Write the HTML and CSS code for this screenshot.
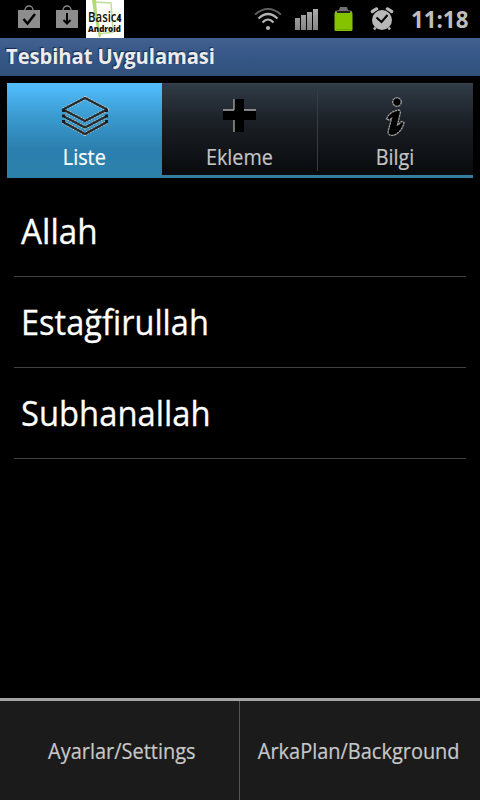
FILE: index.html
```html
<!DOCTYPE html>
<html lang="tr">
<head>
<meta charset="utf-8">
<title>Tesbihat Uygulamasi</title>
<link rel="stylesheet" href="styles.css">
</head>
<body>
<div class="screen">
  <header class="status">
    <svg class="bag" width="22" height="24" viewBox="0 0 22 24"><path d="M7 6V5a4 4 0 0 1 8 0v1" fill="none" stroke="#888" stroke-width="1.3"/><path d="M0 5h22v18H0z" fill="#8d8d8d"/><path d="M5.500 14l4 4.500 7.500-9.500" fill="none" stroke="#000" stroke-width="2.500"/></svg>
    <svg class="bag" width="22" height="24" viewBox="0 0 22 24"><path d="M7 6V5a4 4 0 0 1 8 0v1" fill="none" stroke="#888" stroke-width="1.3"/><path d="M0 5h22v18H0z" fill="#8d8d8d"/><path d="M11 8v10M7.500 15l3.500 3.500 3.500-3.500" fill="none" stroke="#000" stroke-width="2"/></svg>
    <div class="basic">
      <svg class="basic-art" width="38" height="38" viewBox="0 0 38 38"><path d="M8 2l17 1 2 29-14 2" fill="#fff" stroke="#c0de94" stroke-width="1.500"/><path d="M6 0h4l1 12 4 24-2 2L8 14z" fill="#b4da74"/></svg>
      <span class="basic-top">Basic<small>4</small></span>
      <span class="basic-bottom">Android</span>
    </div>
    <svg class="wifi" width="28" height="24" viewBox="0 0 28 24" fill="none" stroke-width="2.200"><path d="M1 7.500Q14-3.500 27 7.500" stroke="#606060" stroke-width="1.800"/><path d="M4.500 11.500Q14 2.500 23.500 11.500M8.500 15.500Q14 9.500 19.500 15.500" stroke="#b4b4b4"/><circle cx="14" cy="21" r="2.100" fill="#b4b4b4"/></svg>
    <svg class="signal" width="24" height="22" viewBox="0 0 24 22"><defs><linearGradient id="sg" x1="0" y1="0" x2="0" y2="1"><stop offset="0" stop-color="#aaa"/><stop offset="1" stop-color="#858585"/></linearGradient></defs><path d="M0 10h5v12H0zM6 7h5v15H6zM12 4h5v18h-5zM18 1h5v21h-5z" fill="url(#sg)"/></svg>
    <svg class="battery" width="19" height="24" viewBox="0 0 19 24"><path d="M1 6V4l4-1 1-3h7l1 3 4 1v2z" fill="#717171"/><rect x=".5" y="5" width="18" height="19" rx="1.500" fill="#85c200"/><path d="M3 5h13" stroke="#222" stroke-width="2"/><path d="M2 22.500h15" stroke="#6ca500" stroke-width="1"/></svg>
    <svg class="alarm" width="24" height="25" viewBox="0 0 24 25"><g stroke="#b8b8b8" stroke-width="3.500" stroke-linecap="round" fill="none"><path d="M2.500 4.500l4-2.500M21.500 4.500l-4-2.500"/></g><circle cx="12" cy="13" r="10.800" fill="#000"/><circle cx="12" cy="13" r="10" fill="#b8b8b8"/><path d="M6.500 10.500l5 4.500 6-7" fill="none" stroke="#000" stroke-width="2"/><path d="M5.500 20.500l-1.500 2M18.500 20.500l1.500 2" stroke="#b8b8b8" stroke-width="2.500"/></svg>
    <span class="clock">11:18</span>
  </header>
  <h1 class="title"><span>Tesbihat Uygulamasi</span></h1>
  <nav class="tabs">
    <div class="tab active">
      <svg width="48" height="40" viewBox="0 0 48 40" fill="none" stroke-linejoin="round"><path d="M24 2L46 13.500 24 25 2 13.500zM2 20l22 11.500L46 20M2 26l22 12 22-12" stroke="#d0cabd" stroke-width="3.800" stroke-dasharray="1.500 1.500"/><path d="M24 2L46 13.500 24 25 2 13.500zM2 20l22 11.500L46 20M2 26l22 12 22-12" stroke="#262a2c" stroke-width="2.200"/><path d="M2.500 13v3M2.500 18.500v3M2.500 24v3M45.500 13v3M45.500 18.500v3M45.500 24v3" stroke="#1c1c1c" stroke-width="3"/></svg>
      <span>Liste</span>
    </div>
    <div class="tab">
      <svg width="48" height="40" viewBox="0 0 48 40"><path d="M18 3h10v11h12v10H28v12H18V24H7V14h11z" fill="#000"/><path d="M18 3v11M18 24v12M7 14h11M28 14h12" stroke="#aaa" stroke-width="1.300"/></svg>
      <span>Ekleme</span>
    </div>
    <div class="tab">
      <svg width="48" height="40" viewBox="0 0 48 40" fill="#000" stroke="#a0a0a0" stroke-width="1.300" stroke-dasharray="2.500 .5"><circle cx="26" cy="6" r="4.300"/><path d="M15.500 23c2-5 6-8 12.500-9 1.500 1 1.500 2.500 1 4L26.500 29c1.500-.5 2.500-2 4-3.500l2.500 1c-1 6-6 12.500-12 13-3.500 0-4.500-2.500-3.500-5.500l3-11.500-2.500 1.500z"/></svg>
      <span>Bilgi</span>
    </div>
  </nav>
  <ul class="list">
    <li><span class="w1">Allah</span></li>
    <li><span class="w2">Estağfirullah</span></li>
    <li><span class="w3">Subhanallah</span></li>
  </ul>
  <footer class="menu">
    <div><span class="settings">Ayarlar/Settings</span></div>
    <div><span class="background">ArkaPlan/Background</span></div>
  </footer>
</div>
</body>
</html>
```
FILE: styles.css
```css
* { box-sizing: border-box; }
body { margin: 0; background: #000; font-family: "Open Sans", "Noto Sans", sans-serif; }
.screen { width: 480px; height: 800px; display: flex; flex-direction: column; overflow: hidden; }
span { display: inline-block; white-space: nowrap; }
.status { height: 38px; flex: none; display: flex; align-items: flex-start; padding-left: 18px; }
.status > svg { flex: none; }
.bag { margin: 5px 16px 0 0; }
.basic { position: relative; width: 38px; height: 38px; margin-left: -8px; background: #fff; color: #111; overflow: hidden; flex: none; }
.basic-art { position: absolute; left: 0; top: 0; }
.basic-top { position: absolute; left: 2px; top: 9px; font: 600 15px/14px "Open Sans", sans-serif; transform: scaleX(.76); transform-origin: 0 0; }
.basic-top small { font-size: 11px; font-weight: 800; }
.basic-bottom { position: absolute; left: 2px; top: 24px; font: 800 8px/10px "Open Sans", sans-serif; }
.wifi { margin: 7px 0 0 130px; }
.signal { margin: 8px 0 0 13px; }
.battery { margin: 7px 0 0 15px; }
.alarm { margin: 7px 0 0 17px; }
.clock { margin-left: 17px; font-size: 23px; line-height: 38px; font-weight: 700; color: #bebebe; transform: scaleX(.97); transform-origin: 0 50%; }
.title { margin: 0; height: 38px; flex: none; padding-left: 6px; font-size: 22px; line-height: 35px; color: #ececec; background: linear-gradient(#43618f, #38598a 35%, #2f5179); text-shadow: -1px -1px 1px #162a46; }
.title span { transform: scaleX(.913); transform-origin: 0 50%; }
.tabs { margin: 7px 7px 0; height: 95px; flex: none; display: grid; grid-template-columns: 155px 155px 156px; background: linear-gradient(#303b47, #1b2026 42%, #080a0c) 0 0 / 100% 91px no-repeat, #347e9f; border-top: 1px solid #38434d; }
.tab { display: flex; flex-direction: column; align-items: center; padding-top: 12px; color: #c4c4c4; font-size: 21.5px; position: relative; }
.tab.active { margin-top: -1px; padding-top: 13px; color: #fff; background: linear-gradient(#53beff, #3a9bd0 35%, #2b7faf 70%, #2c81aa); }
.tab span { line-height: 28px; margin-top: 7px; transform: scaleX(.92); -webkit-text-stroke: .2px; }
.tab:nth-child(2)::after { content: ""; position: absolute; right: -1px; top: 5px; width: 1px; height: 82px; background: #363c42; }
.list { margin: 8px 14px 0; padding: 0; list-style: none; flex: 1; }
.list li { height: 91px; padding-left: 7px; border-bottom: 1px solid #414141; color: #fff; font-size: 35px; line-height: 89px; -webkit-text-stroke: .3px; }
.list span { transform: scaleX(.93); transform-origin: 0 50%; }
.list .w1 { transform: scaleX(.95); }
.list .w3 { transform: scaleX(.936); }
.menu { height: 102px; flex: none; display: flex; border-top: 3px solid #a3a3a3; background: #1b1b1b; color: #c8c8c8; font-size: 22px; line-height: 99px; -webkit-text-stroke: .2px; }
.menu div { flex: none; width: 240px; display: flex; justify-content: center; }
.menu div:first-child { border-right: 1px solid #555; }
.menu .settings { transform: translateX(2.5px) scaleX(.907); }
.menu .background { transform: translateX(-1.5px) scaleX(.907); }
```
